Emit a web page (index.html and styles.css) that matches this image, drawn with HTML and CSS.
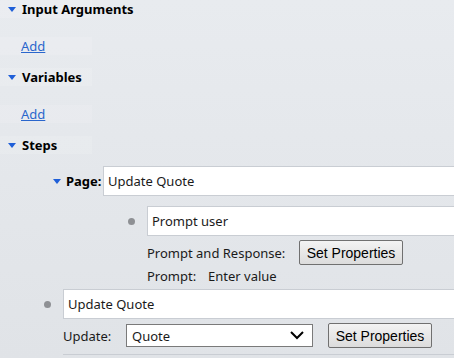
FILE: index.html
```html
<!DOCTYPE html>
<html>
<head>
  <title>Process Editor</title>
  <link rel="stylesheet" href="styles.css">
</head>
<body>
  <div class="editor">
    <div class="section">
      <div class="section-head"><span class="caret"></span>Input Arguments</div>
      <a class="add-link" href="#">Add</a>
    </div>

    <div class="section">
      <div class="section-head"><span class="caret"></span>Variables</div>
      <a class="add-link" href="#">Add</a>
    </div>

    <div class="section steps">
      <div class="section-head"><span class="caret"></span>Steps</div>

      <div class="page-row">
        <div class="page-label"><span class="caret"></span>Page:</div>
        <div class="field">Update Quote</div>
      </div>

      <div class="step nested">
        <div class="step-row">
          <span class="bullet"></span>
          <div class="field">Prompt user</div>
        </div>
        <div class="step-body">
          <div class="prop-row">
            <span class="prop-label">Prompt and Response:</span>
            <button class="set-btn">Set Properties</button>
          </div>
          <div class="prop-row small">
            <span class="prompt-label">Prompt:</span>
            <span>Enter value</span>
          </div>
        </div>
      </div>

      <div class="step">
        <div class="step-row">
          <span class="bullet"></span>
          <div class="field">Update Quote</div>
        </div>
        <div class="step-body">
          <div class="prop-row">
            <span class="update-label">Update:</span>
            <div class="select">
              Quote
              <svg class="chevron" width="14" height="9" viewBox="0 0 14 9">
                <path d="M1 1 L7 7 L13 1" fill="none" stroke="#000" stroke-width="2"/>
              </svg>
            </div>
            <button class="set-btn">Set Properties</button>
          </div>
        </div>
        <div class="next-field"></div>
      </div>
    </div>
  </div>
</body>
</html>
```

FILE: styles.css
```css
:root {
  --caret-blue: #1f5fd8;
  --link-blue: #2a66cc;
  --field-border: #c9cdd3;
  --panel: rgba(255, 255, 255, 0.12);
  --text: #1a1a1a;
}

body {
  margin: 0;
  padding: 0;
  height: 358px;
  overflow: hidden;
  background: linear-gradient(#e8ebef, #e0e3e7);
  font-family: 'Noto Sans', sans-serif;
  font-size: 13px;
  color: var(--text);
}

.section {
  margin-bottom: 13px;
}

.section-head {
  display: flex;
  align-items: center;
  height: 18px;
  padding-left: 8px;
  font-weight: bold;
  color: #000;
  background: linear-gradient(90deg, var(--panel) 0, var(--panel) 92px, transparent 92px);
}

.caret {
  display: inline-block;
  width: 0;
  height: 0;
  border-left: 4px solid transparent;
  border-right: 4px solid transparent;
  border-top: 5px solid var(--caret-blue);
  margin-right: 6px;
  margin-top: 1px;
}

.add-link {
  display: block;
  width: 71px;
  margin-top: 19px;
  padding-left: 21px;
  line-height: 18px;
  color: var(--link-blue);
  text-decoration: underline;
  background: var(--panel);
}

.page-row {
  display: flex;
  align-items: center;
  margin-top: 12px;
  padding-left: 53px;
}

.page-label {
  display: flex;
  align-items: center;
  width: 50px;
  font-weight: bold;
  color: #000;
}

.page-label .caret {
  margin-right: 5px;
}

.field {
  flex: 1;
  height: 28px;
  line-height: 28px;
  padding-left: 4px;
  background: #fff;
  border: 1px solid var(--field-border);
  border-right: none;
}

.step {
  padding-left: 44px;
}

.step.nested {
  padding-left: 128px;
  margin-top: 10px;
}

.step-row {
  display: flex;
  align-items: center;
}

.bullet {
  display: inline-block;
  width: 7px;
  height: 7px;
  border-radius: 50%;
  background: #8e9094;
  margin-right: 12px;
}

.step-body {
  padding-left: 19px;
}

.prop-row {
  display: flex;
  align-items: center;
  margin-top: 4px;
}

.prop-row.small {
  margin-top: 1px;
  height: 20px;
  margin-bottom: 3px;
}

.prop-label {
  width: 152px;
}

.prompt-label {
  width: 61px;
}

.update-label {
  width: 63px;
}

.set-btn {
  height: 25px;
  width: 104px;
  padding: 0;
  font-family: 'Liberation Sans', Arial, sans-serif;
  font-size: 14px;
  color: #000;
  background: linear-gradient(#f3f3f3, #dcdcdc);
  border: 1px solid #707070;
  border-radius: 2px;
}

.select {
  display: flex;
  align-items: center;
  justify-content: space-between;
  box-sizing: border-box;
  width: 187px;
  height: 23px;
  padding: 0 8px 0 5px;
  margin-right: 15px;
  background: #fff;
  border: 1px solid #7a7a7a;
}

.next-field {
  height: 20px;
  margin-top: 6px;
  margin-left: 19px;
  border-top: 1px solid var(--field-border);
}
```
